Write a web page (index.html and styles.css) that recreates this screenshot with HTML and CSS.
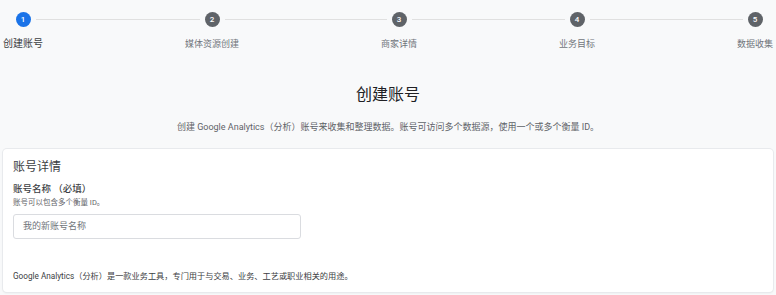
FILE: index.html
```html
<!DOCTYPE html>
<html lang="zh-CN">
<head>
<meta charset="utf-8">
<title>创建账号</title>
<link rel="stylesheet" href="styles.css">
</head>
<body>
<div class="stepper">
  <div class="step active">
    <div class="dot-row"><span class="seg hidden"></span><span class="dot">1</span><span class="seg"></span></div>
    <div class="step-label">创建账号</div>
  </div>
  <div class="connector"></div>
  <div class="step">
    <div class="dot-row"><span class="seg"></span><span class="dot">2</span><span class="seg"></span></div>
    <div class="step-label">媒体资源创建</div>
  </div>
  <div class="connector"></div>
  <div class="step">
    <div class="dot-row"><span class="seg"></span><span class="dot">3</span><span class="seg"></span></div>
    <div class="step-label">商家详情</div>
  </div>
  <div class="connector"></div>
  <div class="step">
    <div class="dot-row"><span class="seg"></span><span class="dot">4</span><span class="seg"></span></div>
    <div class="step-label">业务目标</div>
  </div>
  <div class="connector"></div>
  <div class="step">
    <div class="dot-row"><span class="seg"></span><span class="dot">5</span><span class="seg hidden"></span></div>
    <div class="step-label">数据收集</div>
  </div>
</div>

<h1 class="title">创建账号</h1>
<p class="subtitle">创建 Google Analytics（分析）账号来收集和整理数据。账号可访问多个数据源，使用一个或多个衡量 ID。</p>

<div class="card">
  <div class="card-title">账号详情</div>
  <div class="field-label">账号名称 （必填）</div>
  <div class="field-help">账号可以包含多个衡量 ID。</div>
  <div class="input">我的新账号名称</div>
  <div class="footnote">Google Analytics（分析）是一款业务工具，专门用于与交易、业务、工艺或职业相关的用途。</div>
</div>
</body>
</html>
```

FILE: styles.css
```css
html, body {
  margin: 0;
  padding: 0;
}
body {
  background: #f8f9fa;
  font-family: Roboto, "Noto Sans CJK SC", sans-serif;
  color: #3c4043;
  width: 776px;
  height: 295px;
  overflow: hidden;
}
.stepper {
  display: flex;
  padding: 12px 3px 0;
}
.step {
  display: flex;
  flex-direction: column;
  align-items: center;
}
.dot-row {
  display: flex;
  align-items: center;
  width: 100%;
  height: 15px;
}
.seg {
  flex: 1;
  height: 1px;
  background: #e0e0e0;
}
.seg.hidden {
  visibility: hidden;
}
.dot {
  width: 15px;
  height: 15px;
  border-radius: 50%;
  background: #5f6368;
  color: #fff;
  font-size: 8px;
  font-weight: 500;
  line-height: 15px;
  text-align: center;
  margin: 0 5px;
  flex: none;
}
.step.active .dot {
  background: #1a73e8;
}
.connector {
  flex: 1;
  height: 1px;
  background: #e0e0e0;
  margin-top: 7px;
}
.step-label {
  margin-top: 11px;
  font-size: 9px;
  line-height: 12px;
  color: #70757a;
  white-space: nowrap;
}
.step.active .step-label {
  font-size: 10px;
  color: #3c4043;
}
.title {
  margin: 35px 0 0;
  text-align: center;
  font-size: 16px;
  line-height: 20px;
  font-weight: 400;
  color: #202124;
}
.subtitle {
  margin: 16px 0 0;
  text-align: center;
  font-size: 9px;
  line-height: 12px;
  color: #5f6368;
}
.card {
  margin: 16px 3px 0;
  background: #fff;
  border-radius: 4px;
  box-shadow: 0 0 0 1px #e8eaed, 0 1px 2px rgba(60, 64, 67, 0.12);
  padding: 10px 10px 10px;
}
.card-title {
  font-size: 12px;
  line-height: 16px;
  color: #3c4043;
}
.field-label {
  margin-top: 8px;
  font-size: 9.5px;
  line-height: 12px;
  font-weight: 500;
  color: #3c4043;
}
.field-help {
  margin-top: 3px;
  font-size: 7.5px;
  line-height: 10px;
  color: #5f6368;
}
.input {
  margin-top: 6px;
  width: 288px;
  height: 25px;
  box-sizing: border-box;
  border: 1px solid #dadce0;
  border-radius: 3px;
  padding: 0 9px;
  font-size: 9px;
  line-height: 23px;
  color: #70757a;
}
.footnote {
  margin-top: 31px;
  font-size: 8.2px;
  line-height: 12px;
  color: #3c4043;
}
```
